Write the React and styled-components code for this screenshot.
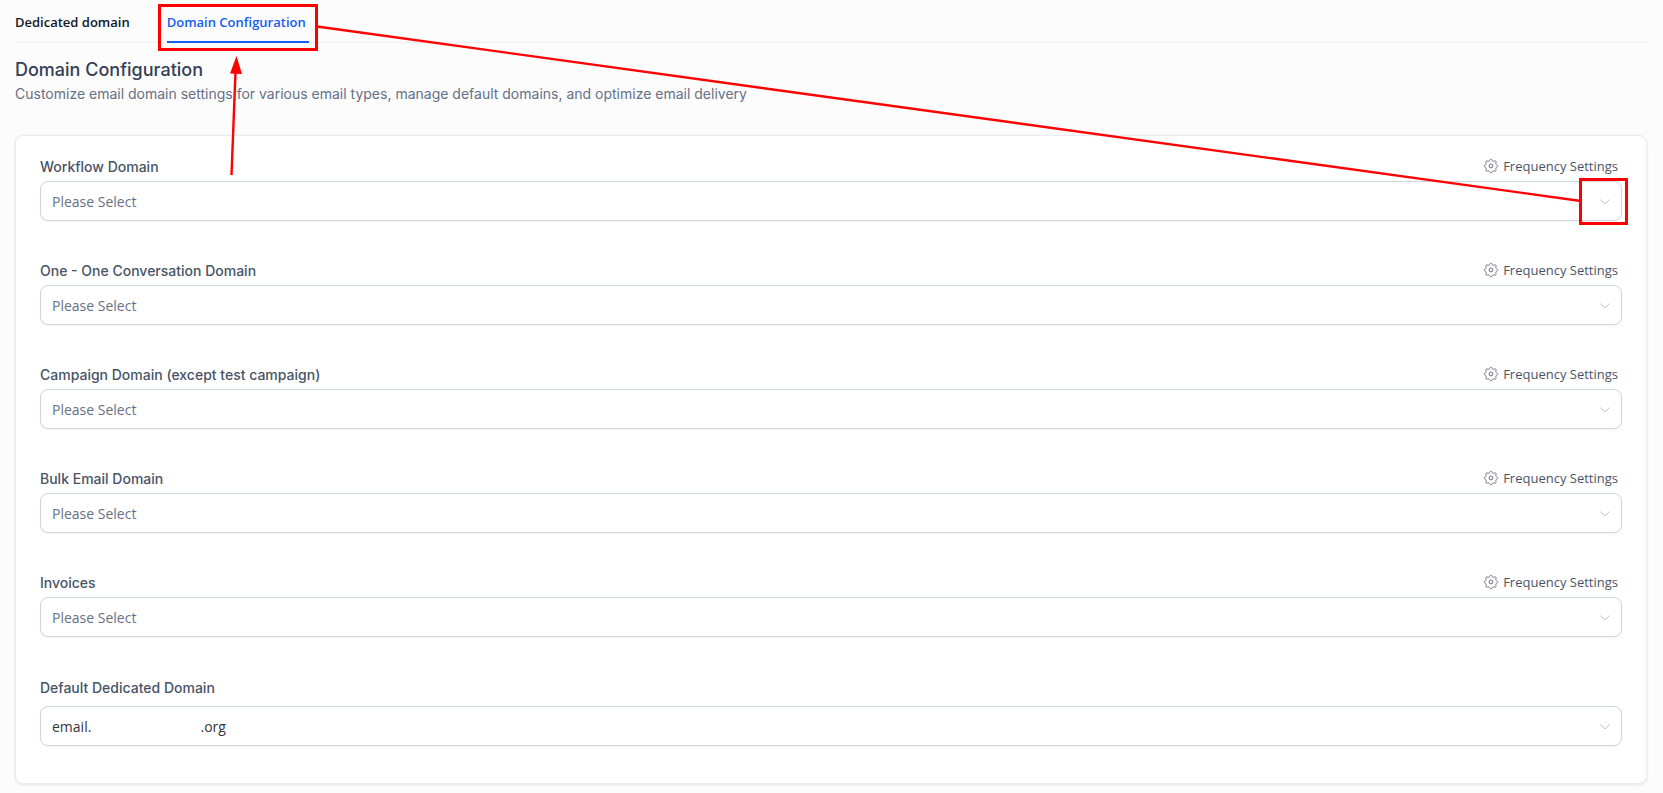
import React from "react";
import styled, { createGlobalStyle } from "styled-components";

const Global = createGlobalStyle`
  *, *::before, *::after { box-sizing: border-box; }
  body { margin: 0; background: #fcfcfd; font-family: Inter, sans-serif; }
`;
const ui = `"Open Sans", "Noto Sans", sans-serif`;

const Page = styled.main`position: relative; padding: 0 16px 9px 15px;`;
const Tabs = styled.nav`display: flex; gap: 34px; height: 43px; border-bottom: 1px solid #eff0f4;`;
const Tab = styled.button`
  position: relative; height: 43px; padding: 3px 3px 0 0; border: 0; background: none;
  border-bottom: 2px solid ${(p) => (p.$active ? "#155eef" : "transparent")};
  color: ${(p) => (p.$active ? "#155eef" : "#101828")};
  font: 600 13px/20px ${ui}; white-space: nowrap; cursor: pointer;
`;
const Mark = styled.span`
  position: absolute; border: 3px solid #ff0000; pointer-events: none;
  inset: ${(p) => p.$inset};
  width: ${(p) => p.$width || "auto"};
`;
const Title = styled.h1`margin: 13px 0 0; font-size: 18px; line-height: 28px; font-weight: 500; color: #344054;`;
const Intro = styled.p`margin: 0; font-size: 14px; line-height: 20px; color: #667085;`;
const Card = styled.section`
  margin-top: 31px; padding: 18px 24px 37px; border: 1px solid #eaecf0; border-radius: 8px;
  background: #fff; box-shadow: 0 1px 3px rgba(16, 24, 40, 0.1);
  display: flex; flex-direction: column; gap: 37px;
`;
const Field = styled.div`
  display: flex; flex-direction: column;
  gap: ${(p) => (p.$spaced ? 4 : 0)}px;
  margin-top: ${(p) => (p.$spaced ? 1 : 0)}px;
`;
const FieldHead = styled.div`display: flex; align-items: flex-start; justify-content: space-between; height: 27px; padding-right: 4px;`;
const Label = styled.label`font-size: 14px; line-height: 26px; font-weight: 500; color: #475467;`;
const SettingsButton = styled.button`
  display: flex; align-items: center; gap: 4px; padding: 0; border: 0; background: none;
  color: #475467; font: 400 13px/24px ${ui}; cursor: pointer;
`;
const SelectWrap = styled.div`position: relative; display: flex;`;
const Select = styled.select`
  appearance: none; width: 100%; height: 40px; padding: 2px 36px 0 11px; border: 1px solid #d0d5dd; border-radius: 8px;
  background: #fff; box-shadow: 0 1px 2px rgba(16, 24, 40, 0.05);
  color: ${(p) => (p.$filled ? "#333639" : "#667085")}; font: 400 14px/20px ${ui};
`;
const Chevron = styled.svg`position: absolute; right: 11px; top: 15px; pointer-events: none;`;
const Connector = styled.svg`
  position: absolute; top: 25px; left: 317px; width: calc(100% - 399px); height: 178px; overflow: visible; pointer-events: none;
`;
const Pointer = styled.svg`position: absolute; top: 56px; left: 228px; pointer-events: none;`;

// Eight-lobed outline of the gear icon
const gearOutline = Array.from({ length: 96 }, (_, i) => {
  const a = (i / 96) * Math.PI * 2;
  const r = 6 + 0.8 * Math.cos(8 * a);
  return `${(8 + r * Math.sin(a)).toFixed(2)},${(8 - r * Math.cos(a)).toFixed(2)}`;
}).join(" ");

const Gear = () => (
  <svg width="16" height="16" viewBox="0 0 16 16" fill="none" stroke="#667085" aria-hidden="true">
    <polygon points={gearOutline} strokeWidth="1" />
    <circle cx="8" cy="8" r="1.9" />
  </svg>
);

const fields = [
  { id: "workflow", label: "Workflow Domain", marked: true },
  { id: "conversation", label: "One - One Conversation Domain" },
  { id: "campaign", label: "Campaign Domain (except test campaign)" },
  { id: "bulk", label: "Bulk Email Domain" },
  { id: "invoices", label: "Invoices" },
  { id: "default", label: "Default Dedicated Domain", value: `email.${"\u00a0".repeat(30)}.org` },
];

function DomainField({ id, label, value, marked }) {
  return (
    <Field $spaced={!!value}>
      <FieldHead>
        <Label htmlFor={id}>{label}</Label>
        {!value && <SettingsButton type="button"><Gear />Frequency Settings</SettingsButton>}
      </FieldHead>
      <SelectWrap>
        <Select id={id} $filled={!!value}><option>{value || "Please Select"}</option></Select>
        <Chevron width="12" height="12" viewBox="0 0 12 12" fill="none" stroke="#c2c2c2" aria-hidden="true">
          <path d="M1.500 3.500L6 8L10.500 3.500" />
        </Chevron>
        {marked && <Mark $inset="-3px -6px -4px auto" $width="49px" />}
      </SelectWrap>
    </Field>
  );
}

export default function App() {
  return (
    <>
      <Global />
      <Page>
        <Tabs>
          <Tab type="button">Dedicated domain</Tab>
          <Tab type="button" $active>Domain Configuration<Mark $inset="4px -9px -10px -9px" /></Tab>
        </Tabs>
        <Title>Domain Configuration</Title>
        <Intro>Customize email domain settings for various email types, manage default domains, and optimize email delivery</Intro>
        <Card>{fields.map((f) => <DomainField key={f.id} {...f} />)}</Card>
        <Connector viewBox="0 0 1264 178" preserveAspectRatio="none" aria-hidden="true">
          <path d="M0 1.5L1264 176" stroke="#ff0000" strokeWidth="2.4" />
        </Connector>
        <Pointer width="16" height="120" viewBox="0 0 16 120" aria-hidden="true">
          <path d="M3.5 119L7.5 16" stroke="#ff0000" strokeWidth="2.4" />
          <path d="M8.500 0L14 18L2 17.500Z" fill="#ff0000" />
        </Pointer>
      </Page>
    </>
  );
}
